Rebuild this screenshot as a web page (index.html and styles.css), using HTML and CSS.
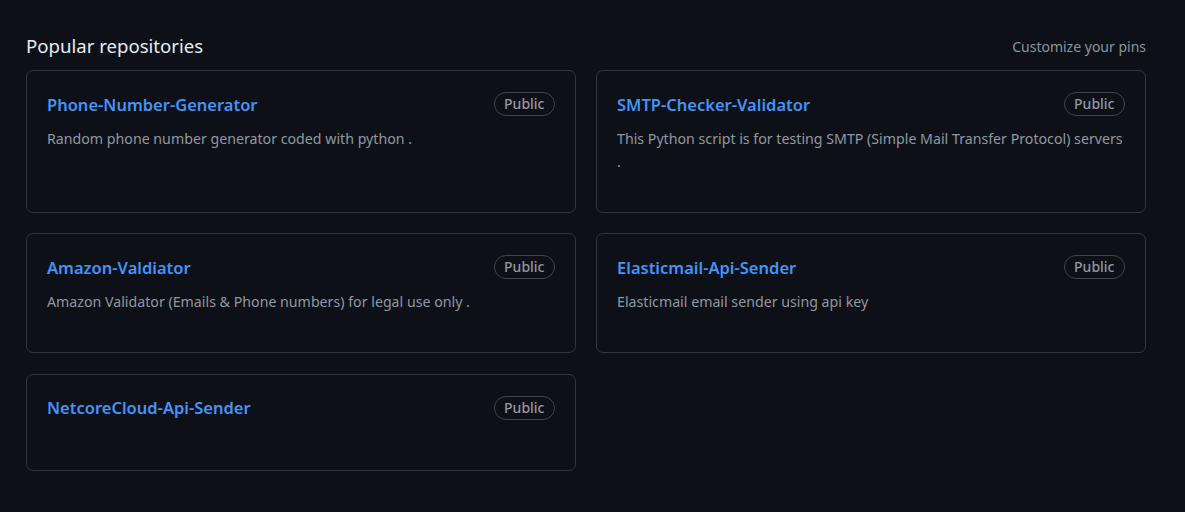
FILE: index.html
```html
<!DOCTYPE html>
<html lang="en">
<head>
<meta charset="utf-8">
<title>Popular repositories</title>
<link rel="stylesheet" href="styles.css">
</head>
<body>
<div class="wrap">
  <div class="head">
    <h2 class="heading">Popular repositories</h2>
    <a class="customize" href="#">Customize your pins</a>
  </div>
  <ol class="pins">
    <li class="card">
      <div class="title-row"><a class="repo" href="#">Phone-Number-Generator</a><span class="label">Public</span></div>
      <p class="desc">Random phone number generator coded with python .</p>
    </li>
    <li class="card">
      <div class="title-row"><a class="repo" href="#">SMTP-Checker-Validator</a><span class="label">Public</span></div>
      <p class="desc">This Python script is for testing SMTP (Simple Mail Transfer Protocol) servers .</p>
    </li>
    <li class="card">
      <div class="title-row"><a class="repo" href="#">Amazon-Valdiator</a><span class="label">Public</span></div>
      <p class="desc">Amazon Validator (Emails &amp; Phone numbers) for legal use only .</p>
    </li>
    <li class="card">
      <div class="title-row"><a class="repo" href="#">Elasticmail-Api-Sender</a><span class="label">Public</span></div>
      <p class="desc">Elasticmail email sender using api key</p>
    </li>
    <li class="card">
      <div class="title-row"><a class="repo" href="#">NetcoreCloud-Api-Sender</a><span class="label">Public</span></div>
      <p class="desc"></p>
    </li>
  </ol>
</div>
</body>
</html>
```
FILE: styles.css
```css
html, body {
  margin: 0;
  padding: 0;
  background: #0d1117;
}
body {
  font-family: "Segoe UI", "Noto Sans", "Open Sans", sans-serif;
  color: #e6edf3;
}
.wrap {
  width: 1120px;
  padding: 31px 0 0 26px;
}
.head {
  display: flex;
  justify-content: space-between;
  align-items: center;
  margin-bottom: 9px;
}
.heading {
  margin: 0;
  font-size: 18.6px;
  font-weight: 400;
  line-height: 30px;
  color: #e6edf3;
}
.customize {
  font-size: 14px;
  color: #8b949e;
  text-decoration: none;
}
.pins {
  list-style: none;
  margin: 0;
  padding: 0;
  display: grid;
  grid-template-columns: 550px 550px;
  column-gap: 20px;
  row-gap: 20.5px;
}
.card {
  border: 1px solid #30363d;
  border-radius: 7px;
  padding: 20px;
  display: flex;
  flex-direction: column;
}
.title-row {
  display: flex;
  justify-content: space-between;
  align-items: center;
  height: 26px;
}
.repo {
  font-size: 16.5px;
  font-weight: 600;
  color: #4493f8;
  text-decoration: none;
}
.label {
  font-size: 14px;
  font-weight: 500;
  line-height: 22px;
  padding: 0 9.5px;
  border: 1px solid #3d444d;
  border-radius: 2em;
  color: #9198a1;
}
.desc {
  margin: 11px 0 18.5px;
  font-size: 14.2px;
  line-height: 22.5px;
  color: #9198a1;
}
```
